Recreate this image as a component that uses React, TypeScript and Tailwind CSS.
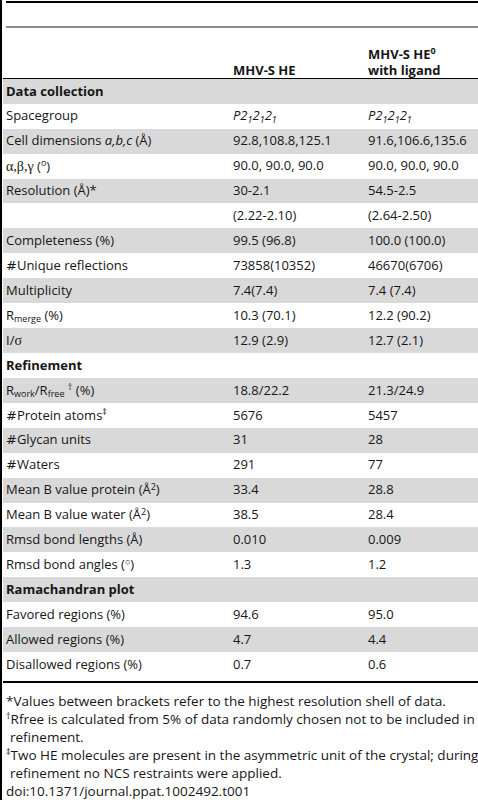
import React from 'react';

type Row = {
  label: React.ReactNode;
  a?: React.ReactNode;
  b?: React.ReactNode;
  section?: boolean;
};

const sub = (t: string) => <sub className="text-[9px]">{t}</sub>;
const sup = (t: string) => <sup className="text-[9px]">{t}</sup>;
const greek = (t: string) => <span className="font-['Liberation_Serif',serif] text-[14px]">{t}</span>;
const hash = <span className="font-['DejaVu_Sans',sans-serif]">#</span>;

const spacegroup = (
  <span className="italic">
    P2{sub('1')}2{sub('1')}2{sub('1')}
  </span>
);

const rows: Row[] = [
  { label: 'Data collection', section: true },
  { label: 'Spacegroup', a: spacegroup, b: spacegroup },
  { label: <>Cell dimensions <i>a,b,c</i> (Å)</>, a: '92.8,108.8,125.1', b: '91.6,106.6,135.6' },
  { label: <>{greek('α,β,γ')} ({sup('o')})</>, a: '90.0, 90.0, 90.0', b: '90.0, 90.0, 90.0' },
  { label: 'Resolution (Å)*', a: '30-2.1', b: '54.5-2.5' },
  { label: '', a: '(2.22-2.10)', b: '(2.64-2.50)' },
  { label: 'Completeness (%)', a: '99.5 (96.8)', b: '100.0 (100.0)' },
  { label: <>{hash}Unique reflections</>, a: '73858(10352)', b: '46670(6706)' },
  { label: 'Multiplicity', a: '7.4(7.4)', b: '7.4 (7.4)' },
  { label: <>R{sub('merge')} (%)</>, a: '10.3 (70.1)', b: '12.2 (90.2)' },
  { label: <>I/{greek('σ')}</>, a: '12.9 (2.9)', b: '12.7 (2.1)' },
  { label: 'Refinement', section: true },
  { label: <>R{sub('work')}/R{sub('free')} {sup('†')} (%)</>, a: '18.8/22.2', b: '21.3/24.9' },
  { label: <>{hash}Protein atoms{sup('‡')}</>, a: '5676', b: '5457' },
  { label: <>{hash}Glycan units</>, a: '31', b: '28' },
  { label: <>{hash}Waters</>, a: '291', b: '77' },
  { label: <>Mean B value protein (Å{sup('2')})</>, a: '33.4', b: '28.8' },
  { label: <>Mean B value water (Å{sup('2')})</>, a: '38.5', b: '28.4' },
  { label: 'Rmsd bond lengths (Å)', a: '0.010', b: '0.009' },
  { label: <>Rmsd bond angles ({sup('○')})</>, a: '1.3', b: '1.2' },
  { label: 'Ramachandran plot', section: true },
  { label: 'Favored regions (%)', a: '94.6', b: '95.0' },
  { label: 'Allowed regions (%)', a: '4.7', b: '4.4' },
  { label: 'Disallowed regions (%)', a: '0.7', b: '0.6' },
];

export default function App() {
  return (
    <div className="flex h-[800px] w-[478px] overflow-hidden bg-white font-['Open_Sans',sans-serif] text-[13px] text-[#161616]">
      {/* page edge */}
      <div className="w-[2px] shrink-0 bg-black" />

      <div className="flex flex-1 flex-col pl-[1px]">
        <div className="ml-[3px] mt-[1px] h-[2px] bg-black" />
        <div className="ml-[3px] mt-[23px] h-[2px] bg-[#8a8a8a]" />

        {/* header */}
        <div className="flex h-[51px] items-end border-b-[1.5px] border-black font-bold leading-[16px]">
          <div className="w-[230px]" />
          <div className="w-[135px]">MHV-S HE</div>
          <div className="flex-1">
            <div className="flex items-start">
              <span>MHV-S HE</span>
              <span className="text-[9px] leading-[10px]">0</span>
            </div>
            <div>with ligand</div>
          </div>
        </div>

        {rows.map((r, i) => (
          <div
            key={i}
            className={`flex h-[25px] items-center ${i % 2 === 0 ? 'bg-[#d9d9d9]' : 'bg-white'} ${r.section ? 'font-bold' : ''}`}
          >
            <div className="w-[230px] pl-[3px] whitespace-nowrap">{r.label}</div>
            <div className="w-[135px] whitespace-nowrap">{r.a}</div>
            <div className="flex-1 whitespace-nowrap">{r.b}</div>
          </div>
        ))}

        <div className="mt-[4px] h-[2px] bg-black" />

        {/* footnotes */}
        <div className="mt-[9px] pl-[3px] text-[13.5px] leading-[18px] whitespace-nowrap">
          <p>*Values between brackets refer to the highest resolution shell of data.</p>
          <p>{sup('†')}Rfree is calculated from 5% of data randomly chosen not to be included in</p>
          <p className="pl-[4px]">refinement.</p>
          <p>{sup('‡')}Two HE molecules are present in the asymmetric unit of the crystal; during</p>
          <p className="pl-[4px]">refinement no NCS restraints were applied.</p>
          <p>doi:10.1371/journal.ppat.1002492.t001</p>
        </div>
      </div>
    </div>
  );
}
